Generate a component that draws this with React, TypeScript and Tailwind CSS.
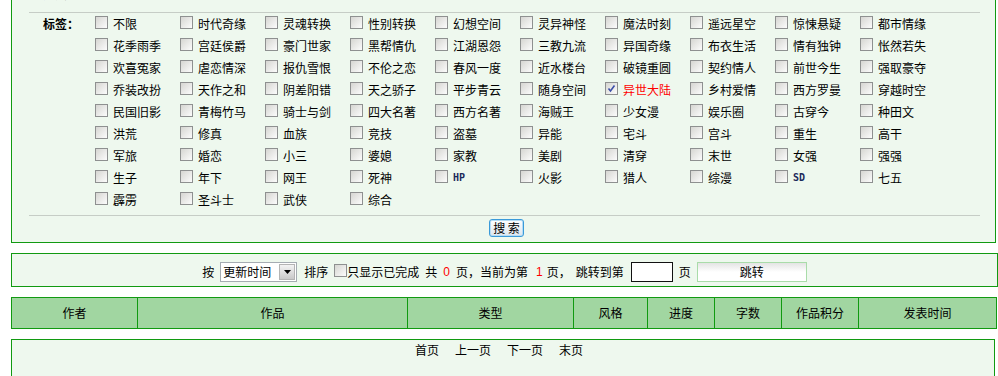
const tags = [
  "不限", "时代奇缘", "灵魂转换", "性别转换", "幻想空间", "灵异神怪", "魔法时刻", "遥远星空", "惊悚悬疑", "都市情缘",
  "花季雨季", "宫廷侯爵", "豪门世家", "黑帮情仇", "江湖恩怨", "三教九流", "异国奇缘", "布衣生活", "情有独钟", "怅然若失",
  "欢喜冤家", "虐恋情深", "报仇雪恨", "不伦之恋", "春风一度", "近水楼台", "破镜重圆", "契约情人", "前世今生", "强取豪夺",
  "乔装改扮", "天作之和", "阴差阳错", "天之骄子", "平步青云", "随身空间", "异世大陆", "乡村爱情", "西方罗曼", "穿越时空",
  "民国旧影", "青梅竹马", "骑士与剑", "四大名著", "西方名著", "海贼王", "少女漫", "娱乐圈", "古穿今", "种田文",
  "洪荒", "修真", "血族", "竞技", "盗墓", "异能", "宅斗", "宫斗", "重生", "高干",
  "军旅", "婚恋", "小三", "婆媳", "家教", "美剧", "清穿", "末世", "女强", "强强",
  "生子", "年下", "网王", "死神", "HP", "火影", "猎人", "综漫", "SD", "七五",
  "霹雳", "圣斗士", "武侠", "综合",
];

const prevRow = ["不限", "连载中", "已完成", "暂停", "全部", "原创", "同人"];

const columns = [
  { label: "作者", w: "w-[126px]" },
  { label: "作品", w: "w-[270px]" },
  { label: "类型", w: "w-[166px]" },
  { label: "风格", w: "w-[74px]" },
  { label: "进度", w: "w-[67px]" },
  { label: "字数", w: "w-[67px]" },
  { label: "作品积分", w: "w-[77px]" },
  { label: "发表时间", w: "w-[137px]" },
];

const CheckBox = ({ checked = false }: { checked?: boolean }) => (
  <span className="inline-flex w-[13px] h-[13px] shrink-0 items-center justify-center border border-[#8e9090] bg-linear-to-br from-[#d6d6d2] to-[#fcfcfc]">
    {checked && (
      <svg width="9" height="9" viewBox="0 0 9 9">
        <path d="M1.5 4.5 L3.5 7 L7.5 1.5" fill="none" stroke="#3d50a8" strokeWidth="1.6" />
      </svg>
    )}
  </span>
);

const App = () => {
  return (
    <div className="w-[998px] h-[376px] overflow-hidden bg-white text-[12px] leading-none text-black font-['Noto_Sans_CJK_SC',sans-serif]">
      {/* 搜索条件 */}
      <div className="ml-[11px] w-[985px] -mt-[18px] border border-[#119a11] bg-[#eef8ee]">
        <div className="flex h-[22px] items-center">
          <span className="w-[83px] pl-[31px] font-bold text-[#333]">进度：</span>
          {prevRow.map((t, i) => (
            <span key={t} className={`w-[85px] pl-[18px] ${i === 0 ? "text-[#e00000]" : "text-[#222]"}`}>
              {t}
            </span>
          ))}
        </div>
        <div className="mt-[7px] ml-[17px] mr-[15px] h-px bg-[#c6cdc6]" />

        <div className="flex">
          <div className="w-[83px] pl-[31px] h-[22px] flex items-center font-bold">标签：</div>
          <div className="grid grid-cols-[repeat(10,85px)] auto-rows-[22px]">
            {tags.map((t) => {
              const checked = t === "异世大陆";
              const latin = t === "HP" || t === "SD";
              return (
                <label key={t} className="flex items-center">
                  <span className="mb-[4px] mr-[5px] flex">
                    <CheckBox checked={checked} />
                  </span>
                  <span
                    className={
                      latin
                        ? "font-['DejaVu_Sans_Mono',monospace] text-[10px] font-bold text-[#1b2a5a]"
                        : checked
                        ? "text-[#ff0000]"
                        : ""
                    }
                  >
                    {t}
                  </span>
                </label>
              );
            })}
          </div>
        </div>

        <div className="mt-[4px] ml-[17px] mr-[15px] h-px bg-[#c6cdc6]" />
        <div className="flex justify-center pt-[3px] pb-[5px] pl-[6px]">
          <button className="w-[35px] h-[18px] rounded-[3px] border border-[#3a9ad9] bg-linear-to-b from-white to-[#dde6ee] shadow-[inset_0_0_0_1px_#b5dcf5] text-[12px]">
            搜 索
          </button>
        </div>
      </div>

      {/* 排序 / 跳转 */}
      <div className="ml-[11px] w-[987px] mt-[10px] border border-[#119a11] bg-[#eef8ee]">
        <div className="h-[32px] pt-[4px] flex items-center justify-center">
          <span>按</span>
          <span className="ml-[6px] flex w-[77px] h-[20px] items-center border border-[#a5acb2] bg-white">
            <span className="flex-1 pl-[2px]">更新时间</span>
            <span className="mr-px flex w-[16px] h-[16px] items-center justify-center border border-[#b4b4b4] bg-linear-to-b from-[#f4f4f4] to-[#c9c9c9]">
              <svg width="7" height="4" viewBox="0 0 7 4">
                <path d="M0 0 H7 L3.5 4 Z" fill="#000" />
              </svg>
            </span>
          </span>
          <span className="ml-[7px]">排序</span>
          <span className="ml-[6px] mb-[4px] flex">
            <CheckBox />
          </span>
          <span>只显示已完成</span>
          <span className="ml-[6px]">共</span>
          <span className="ml-[6px] text-[#ff0000] font-['Liberation_Sans',sans-serif]">0</span>
          <span className="ml-[6px]">页，当前为第</span>
          <span className="ml-[8px] text-[#ff0000] font-['Liberation_Sans',sans-serif]">1</span>
          <span className="ml-[4px]">页，</span>
          <span className="ml-[5px]">跳转到第</span>
          <span className="ml-[7px] w-[42px] h-[20px] border border-[#111] bg-white" />
          <span className="ml-[6px]">页</span>
          <button className="ml-[6px] w-[110px] h-[20px] border border-[#a9dca9] bg-linear-to-b from-[#e4e4e4] via-white to-white text-[12px]">
            跳转
          </button>
        </div>
      </div>

      {/* 表头 */}
      <div className="ml-[11px] w-[986px] mt-[10px] flex border border-[#119a11] bg-[#a1d6a1]">
        {columns.map((c, i) => (
          <div
            key={c.label}
            className={`${c.w} h-[30px] flex items-center justify-center ${i < columns.length - 1 ? "border-r border-[#119a11]" : ""}`}
          >
            {c.label}
          </div>
        ))}
      </div>

      {/* 分页 */}
      <div className="ml-[11px] w-[984px] mt-[10px] h-[60px] border border-[#119a11] bg-[#eef8ee]">
        <div className="h-[20px] flex items-center justify-center gap-[16px] pr-[8px]">
          <span>首页</span>
          <span>上一页</span>
          <span>下一页</span>
          <span>末页</span>
        </div>
      </div>
    </div>
  );
};

export default App;
